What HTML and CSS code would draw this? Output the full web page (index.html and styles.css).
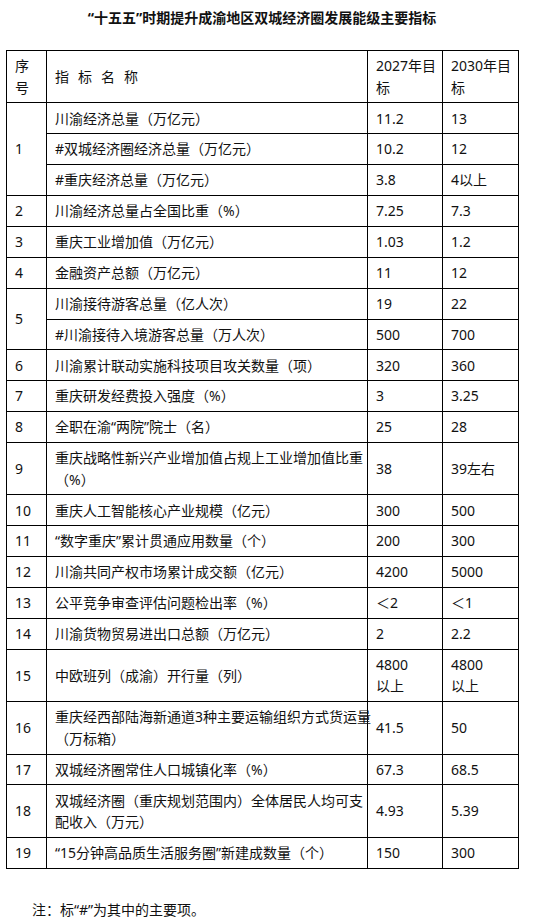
FILE: index.html
```html
<!DOCTYPE html>
<html lang="zh-CN">
<head>
  <meta charset="UTF-8">
  <title>“十五五”时期提升成渝地区双城经济圈发展能级主要指标</title>
  <meta name="viewport" content="width=device-width,initial-scale=1">
  <link rel="stylesheet" href="styles.css">
</head>
<body>
  <div class="page">
    <h1 class="title">“十五五”时期提升成渝地区双城经济圈发展能级主要指标</h1>

    <table class="targets">
      <colgroup>
        <col class="c-no">
        <col class="c-name">
        <col class="c-y27">
        <col class="c-y30">
      </colgroup>
      <thead>
        <tr>
          <th>序<br>号</th>
          <th class="spaced">指标名称</th>
          <th>2027年目<br>标</th>
          <th>2030年目<br>标</th>
        </tr>
      </thead>
      <tbody>
        <tr><td rowspan="3">1</td><td>川渝经济总量（万亿元）</td><td>11.2</td><td>13</td></tr>
        <tr><td>#双城经济圈经济总量（万亿元）</td><td>10.2</td><td>12</td></tr>
        <tr><td>#重庆经济总量（万亿元）</td><td>3.8</td><td>4以上</td></tr>
        <tr><td>2</td><td>川渝经济总量占全国比重（%）</td><td>7.25</td><td>7.3</td></tr>
        <tr><td>3</td><td>重庆工业增加值（万亿元）</td><td>1.03</td><td>1.2</td></tr>
        <tr><td>4</td><td>金融资产总额（万亿元）</td><td>11</td><td>12</td></tr>
        <tr><td rowspan="2">5</td><td>川渝接待游客总量（亿人次）</td><td>19</td><td>22</td></tr>
        <tr><td>#川渝接待入境游客总量（万人次）</td><td>500</td><td>700</td></tr>
        <tr><td>6</td><td>川渝累计联动实施科技项目攻关数量（项）</td><td>320</td><td>360</td></tr>
        <tr><td>7</td><td>重庆研发经费投入强度（%）</td><td>3</td><td>3.25</td></tr>
        <tr><td>8</td><td>全职在渝“两院”院士（名）</td><td>25</td><td>28</td></tr>
        <tr><td>9</td><td>重庆战略性新兴产业增加值占规上工业增加值比重<br>（%）</td><td>38</td><td>39左右</td></tr>
        <tr><td>10</td><td>重庆人工智能核心产业规模（亿元）</td><td>300</td><td>500</td></tr>
        <tr><td>11</td><td>“数字重庆”累计贯通应用数量（个）</td><td>200</td><td>300</td></tr>
        <tr><td>12</td><td>川渝共同产权市场累计成交额（亿元）</td><td>4200</td><td>5000</td></tr>
        <tr><td>13</td><td>公平竞争审查评估问题检出率（%）</td><td>＜2</td><td>＜1</td></tr>
        <tr><td>14</td><td>川渝货物贸易进出口总额（万亿元）</td><td>2</td><td>2.2</td></tr>
        <tr><td>15</td><td>中欧班列（成渝）开行量（列）</td><td>4800<br>以上</td><td>4800<br>以上</td></tr>
        <tr><td>16</td><td>重庆经西部陆海新通道3种主要运输组织方式货运量<br>（万标箱）</td><td>41.5</td><td>50</td></tr>
        <tr><td>17</td><td>双城经济圈常住人口城镇化率（%）</td><td>67.3</td><td>68.5</td></tr>
        <tr><td>18</td><td>双城经济圈（重庆规划范围内）全体居民人均可支<br>配收入（万元）</td><td>4.93</td><td>5.39</td></tr>
        <tr><td>19</td><td>“15分钟高品质生活服务圈”新建成数量（个）</td><td>150</td><td>300</td></tr>
      </tbody>
    </table>

    <p class="note">注：标“#”为其中的主要项。</p>
  </div>
</body>
</html>
```

FILE: styles.css
```css
body{margin:0;background:#fff;color:#111;
  font-family:"Noto Sans","Noto Sans CJK SC",sans-serif;font-size:14px;line-height:21.5px}
.page{width:512px;padding:0 6px}

.title{margin:7px 0 0;font-size:14px;font-weight:bold;line-height:21px;text-align:center}

.targets{width:512px;margin-top:22px;border-collapse:collapse;table-layout:fixed}
.c-no{width:40px}
.c-name{width:321px}
.c-y27{width:75px}
.c-y30{width:76px}
.targets th,.targets td{border:1px solid #000;padding:4.2px 2px 4.2px 8px;
  text-align:left;vertical-align:middle;font-weight:normal;white-space:nowrap}
.targets .spaced{letter-spacing:9px}

.note{margin:30px 0 0;padding-left:26px;line-height:21px}
```
